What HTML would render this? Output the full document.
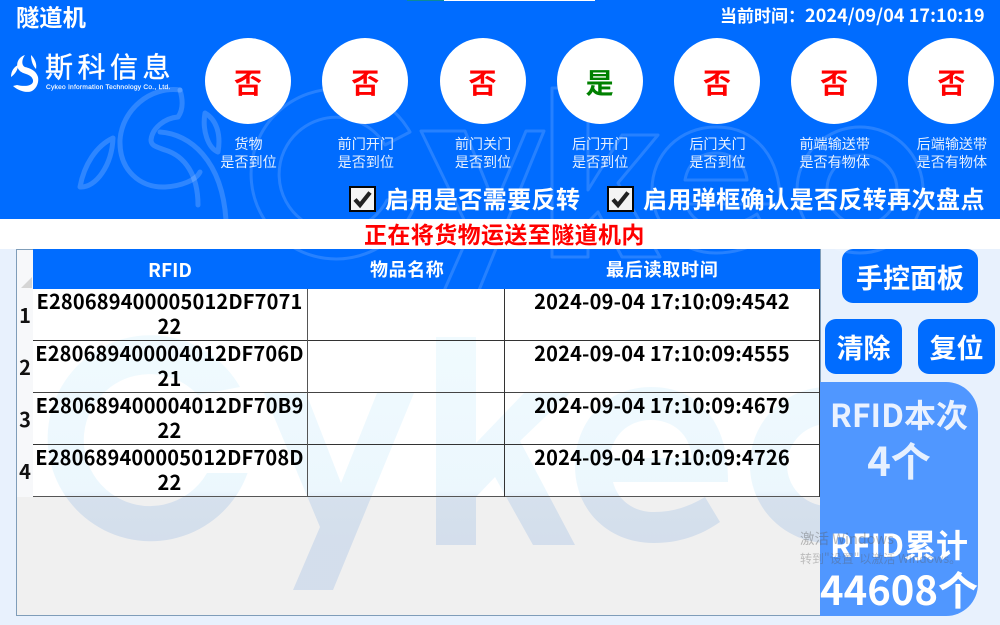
<!DOCTYPE html>
<html lang="zh-CN"><head><meta charset="utf-8"><title>隧道机</title>
<style>
*{box-sizing:border-box;margin:0;padding:0}
html,body{width:1000px;height:625px;overflow:hidden}
body{position:relative;background:#e8f1fd;font-family:"Liberation Sans","Noto Sans CJK SC",sans-serif}
.a{position:absolute}
.t{position:absolute;white-space:nowrap;font-family:"Noto Sans CJK SC","Liberation Sans",sans-serif;font-weight:700;line-height:1}
.c{position:absolute;width:86px;height:86px;border-radius:50%;background:#fff;top:38px}
.g{position:absolute;top:68px;width:86px;text-align:center;font:700 28px/28px "Noto Sans CJK SC",sans-serif;color:#f00}
.l{position:absolute;top:136px;width:100px;text-align:center;font:400 14.1px/17.5px "Noto Sans CJK SC",sans-serif;color:#e6f0ff}
.b{position:absolute;background:#006cff;border-radius:11px}
.cb{position:absolute;top:186px;width:27px;height:26px;background:#f4f4f4;border:2px solid #050505}
.h{position:absolute;background:#555}
.id{position:absolute;left:32.5px;width:274px;text-align:center;font:700 20px/24.5px "Noto Sans CJK SC",sans-serif;letter-spacing:.16px;color:#000;white-space:nowrap}
.rn{position:absolute;left:17px;width:16px;text-align:center;font:700 20px/20px "Noto Sans CJK SC",sans-serif;color:#111}
.tm{position:absolute;left:505px;width:314px;text-align:center;font:700 20px/24px "Noto Sans CJK SC",sans-serif;letter-spacing:.19px;color:#000;white-space:nowrap}
</style></head><body>
<div class="a" style="left:0;top:0;width:1000px;height:219px;background:#006cff"></div>
<div class="a" style="left:407px;top:0;width:37px;height:1px;background:#0d8a9a"></div>
<div class="a" style="left:444px;top:0;width:151px;height:1px;background:#fff"></div>
<div class="a" style="left:0;top:219px;width:1000px;height:30px;background:#fff"></div>

<!-- table background -->
<div class="a" style="left:16px;top:249px;width:805px;height:367px;background:#f0f0f0;border:1px solid #7f9db9"></div>
<div class="a" style="left:17px;top:250px;width:16px;height:247px;background:#f7f8fa"></div>
<div class="a" style="left:33px;top:289px;width:787px;height:207px;background:#fff"></div>
<div class="a" style="left:33px;top:249px;width:787px;height:40px;background:#006cff"></div>
<div class="a" style="left:21px;top:277px;width:0;height:0;border-left:11px solid transparent;border-bottom:11px solid #d5d5d5"></div>

<!-- buttons / panel -->
<div class="b" style="left:842px;top:249px;width:136px;height:54px"></div>
<div class="b" style="left:825px;top:319px;width:77px;height:55px"></div>
<div class="b" style="left:918px;top:319px;width:77px;height:55px"></div>
<div class="a" style="left:820px;top:382px;width:158px;height:234px;background:#5097ff;border-radius:0 32px 32px 0"></div>

<!-- large pale watermark -->
<svg class="a" style="left:0;top:0" width="1000" height="625" viewBox="0 0 1000 625">
 <defs>
  <linearGradient id="wm" gradientUnits="userSpaceOnUse" x1="0" y1="337" x2="0" y2="545">
   <stop offset="0" stop-color="#a0e0f8" stop-opacity=".16"/>
   <stop offset=".74" stop-color="#a0d8f6" stop-opacity=".2"/>
   <stop offset=".78" stop-color="#8ab4e4" stop-opacity=".26"/>
   <stop offset="1" stop-color="#8ab0e0" stop-opacity=".28"/>
  </linearGradient>
  <clipPath id="wc"><rect x="0" y="0" width="820" height="625"/></clipPath>
 </defs>
 <g fill="url(#wm)" clip-path="url(#wc)">
  <path d="M240,387A103,103 0 1 0 247.6,473L207,473A66,66 0 1 1 198,395Z"/>
  <path d="M264,393H306L341,483L377,393H414L333,590H293L320,527Z"/>
  <path d="M436,337H476V443L524,393H570L520,441L575,545H533L495,477L476,497V545H436Z"/>
  <path fill-rule="evenodd" d="M651,387C700,387 729,424 728,482H613C618,501 634,512 654,512C674,512 690,506 705,497L720,522C700,536 678,543 654,543C608,543 575,510 575,466C575,421 607,387 651,387ZM651,420C629,420 613,434 609,458H692C690,434 673,420 651,420Z"/>
  <path fill-rule="evenodd" d="M828,387A78,78 0 1 1 827.9,387ZM828,424A41,41 0 1 0 828.1,424Z"/>
 </g>
</svg>

<!-- outline ghost watermark -->
<svg class="a" style="left:0;top:0" width="1000" height="300" viewBox="0 0 1000 300">
 <g fill="none" stroke="#fff" stroke-opacity=".15" stroke-width="3" stroke-linejoin="round">
  <path d="M410,132A85,85 0 1 0 417,200L387,200A57,57 0 1 1 385,145Z"/>
  <path d="M421,131H465L495,205L526,131H544L475,300H440L470,232Z"/>
  <path d="M552,88H588V190L622,135H658L618,183L660,257H622L598,212L588,222V257H552Z"/>
  <path fill-rule="evenodd" d="M716,127C758,127 781,160 780,204H686C690,218 702,226 718,226C734,226 746,221 757,214L768,236C752,248 735,253 716,253C680,253 652,226 652,190C652,154 680,127 716,127ZM716,153C700,153 688,163 685,180H747C745,163 732,153 716,153Z"/>
  <circle cx="860" cy="190" r="63"/><circle cx="862" cy="190" r="35"/>
 </g>
 <g fill="none" stroke="#fff" stroke-opacity=".18" stroke-width="5" stroke-linecap="round" stroke-linejoin="round">
  <path d="M180,90C150,86 122,110 120,140C119,170 140,188 165,187C182,186 196,180 200,172"/>
  <path d="M180,90C183,100 183,110 178,117C165,118 152,128 151,140C151,146 157,147 165,150C185,156 198,175 198,205"/>
  <path d="M160,132C190,134 222,160 226,220"/>
  <path d="M205,113C217,120 221,135 218,152C208,148 202,130 205,113Z"/>
  <path d="M113,138C96,146 84,165 80,187C96,188 112,165 113,138Z"/>
 </g>
</svg>

<!-- grid lines -->
<div class="h" style="left:33px;top:340px;width:787px;height:1px;background:#333"></div>
<div class="h" style="left:33px;top:392px;width:787px;height:1px;background:#444"></div>
<div class="h" style="left:33px;top:444px;width:787px;height:1px;background:#333"></div>
<div class="h" style="left:33px;top:496px;width:787px;height:1px;background:#555"></div>
<div class="h" style="left:307px;top:289px;width:1px;height:208px"></div>
<div class="h" style="left:504px;top:289px;width:1px;height:208px;background:#333"></div>
<div class="h" style="left:819px;top:289px;width:1px;height:208px;background:#333"></div>

<!-- header text -->
<div class="t" style="left:16px;top:5px;font-size:23.3px;color:#fff">隧道机</div>
<div class="t" style="left:720px;top:6px;font-size:17px;color:#fff">当前时间：<span style="font-size:18px;letter-spacing:.07px">2024/09/04 17:10:19</span></div>

<!-- logo -->
<svg class="a" style="left:8px;top:50px" width="36" height="46" viewBox="8 50 36 46">
 <path fill="#fff" d="M25,55C18,57 15,65 19,70C23,75 31,73 33,80C34,86 25,87 17,85L13,86C20,92 28,93 32,91C37,88 39,82 38,77C36,70 29,68 25,67C21,65 22,59 25,55Z"/>
 <path fill="#fff" d="M31,55C35,59 37,64 36,69C33,66 31,61 31,55Z"/>
 <path fill="#fff" d="M11,77C11,71 14,67 18,65C18,70 15,74 11,77Z"/>
</svg>
<div class="t" style="left:45px;top:52px;font-size:28px;font-weight:400;letter-spacing:4.5px;color:#fff;-webkit-text-stroke:.4px #fff">斯科信息</div>
<div class="t" style="left:46px;top:85px;font-size:6.6px;font-weight:400;letter-spacing:.24px;color:#fff;-webkit-text-stroke:.15px #fff;font-family:'Liberation Sans',sans-serif">Cykeo Information Technology Co., Ltd.</div>

<!-- status circles -->
<div class="c" style="left:205px"></div><div class="g" style="left:205px">否</div>
<div class="c" style="left:322.3px"></div><div class="g" style="left:322.3px">否</div>
<div class="c" style="left:439.5px"></div><div class="g" style="left:439.5px">否</div>
<div class="c" style="left:556.7px"></div><div class="g" style="left:556.7px;color:#008000">是</div>
<div class="c" style="left:674px"></div><div class="g" style="left:674px">否</div>
<div class="c" style="left:791.2px"></div><div class="g" style="left:791.2px">否</div>
<div class="c" style="left:908.4px"></div><div class="g" style="left:908.4px">否</div>

<div class="l" style="left:198.5px">货物<br>是否到位</div>
<div class="l" style="left:315.8px">前门开门<br>是否到位</div>
<div class="l" style="left:433px">前门关门<br>是否到位</div>
<div class="l" style="left:550.2px">后门开门<br>是否到位</div>
<div class="l" style="left:667.5px">后门关门<br>是否到位</div>
<div class="l" style="left:784.7px">前端输送带<br>是否有物体</div>
<div class="l" style="left:901.9px">后端输送带<br>是否有物体</div>

<!-- checkboxes -->
<div class="cb" style="left:348.5px"><svg width="23" height="22" viewBox="0 0 23 22"><path d="M4,11.5L9,17L19,4.5" fill="none" stroke="#222" stroke-width="4.2"/></svg></div>
<div class="cb" style="left:606.5px"><svg width="23" height="22" viewBox="0 0 23 22"><path d="M4,11.5L9,17L19,4.5" fill="none" stroke="#222" stroke-width="4.2"/></svg></div>
<div class="t" style="left:385px;top:186px;font-size:24px;letter-spacing:.42px;color:#fff">启用是否需要反转</div>
<div class="t" style="left:643px;top:186px;font-size:24px;letter-spacing:.42px;color:#fff">启用弹框确认是否反转再次盘点</div>

<div class="t" style="left:364px;top:222px;font-size:23px;letter-spacing:.4px;color:#f00">正在将货物运送至隧道机内</div>

<!-- table header -->
<div class="t" style="left:33px;top:260px;width:274px;text-align:center;font-size:19px;color:#fff">RFID</div>
<div class="t" style="left:370px;top:260px;font-size:18px;letter-spacing:.6px;color:#fff">物品名称</div>
<div class="t" style="left:606px;top:260px;font-size:18px;letter-spacing:.75px;color:#fff">最后读取时间</div>

<!-- rows -->
<div class="rn" style="top:305px">1</div>
<div class="rn" style="top:357px">2</div>
<div class="rn" style="top:409px">3</div>
<div class="rn" style="top:461px">4</div>

<div class="id" style="top:289px">E280689400005012DF7071<br>22</div>
<div class="id" style="top:341px">E280689400004012DF706D<br>21</div>
<div class="id" style="top:393px">E280689400004012DF70B9<br>22</div>
<div class="id" style="top:445px">E280689400005012DF708D<br>22</div>

<div class="tm" style="top:289px">2024-09-04 17:10:09:4542</div>
<div class="tm" style="top:341px">2024-09-04 17:10:09:4555</div>
<div class="tm" style="top:393px">2024-09-04 17:10:09:4679</div>
<div class="tm" style="top:445px">2024-09-04 17:10:09:4726</div>

<!-- button text -->
<div class="t" style="left:842px;top:263px;width:136px;text-align:center;font-size:27px;color:#fff">手控面板</div>
<div class="t" style="left:825px;top:333px;width:77px;text-align:center;font-size:27px;color:#fff">清除</div>
<div class="t" style="left:918px;top:333px;width:77px;text-align:center;font-size:27px;color:#fff">复位</div>

<!-- panel text -->
<div class="t" style="left:820px;top:398px;width:158px;text-align:center;font-size:32px;color:#eaf2ff">RFID本次</div>
<div class="t" style="left:820px;top:439px;width:158px;text-align:center;font-size:40px;color:#e6f0ff">4个</div>
<div class="t" style="left:820px;top:528px;width:158px;text-align:center;font-size:32px;color:#fff">RFID累计</div>
<div class="t" style="left:820px;top:568px;width:158px;text-align:center;font-size:40px;color:#fff">44608个</div>

<!-- windows activation -->
<div class="t" style="left:800px;top:532px;font-size:14.5px;font-weight:400;color:rgba(90,90,90,.4)">激活 Windows</div>
<div class="t" style="left:800px;top:553px;font-size:12px;font-weight:400;color:rgba(90,90,90,.35)">转到"设置"以激活 Windows。</div>
</body></html>
